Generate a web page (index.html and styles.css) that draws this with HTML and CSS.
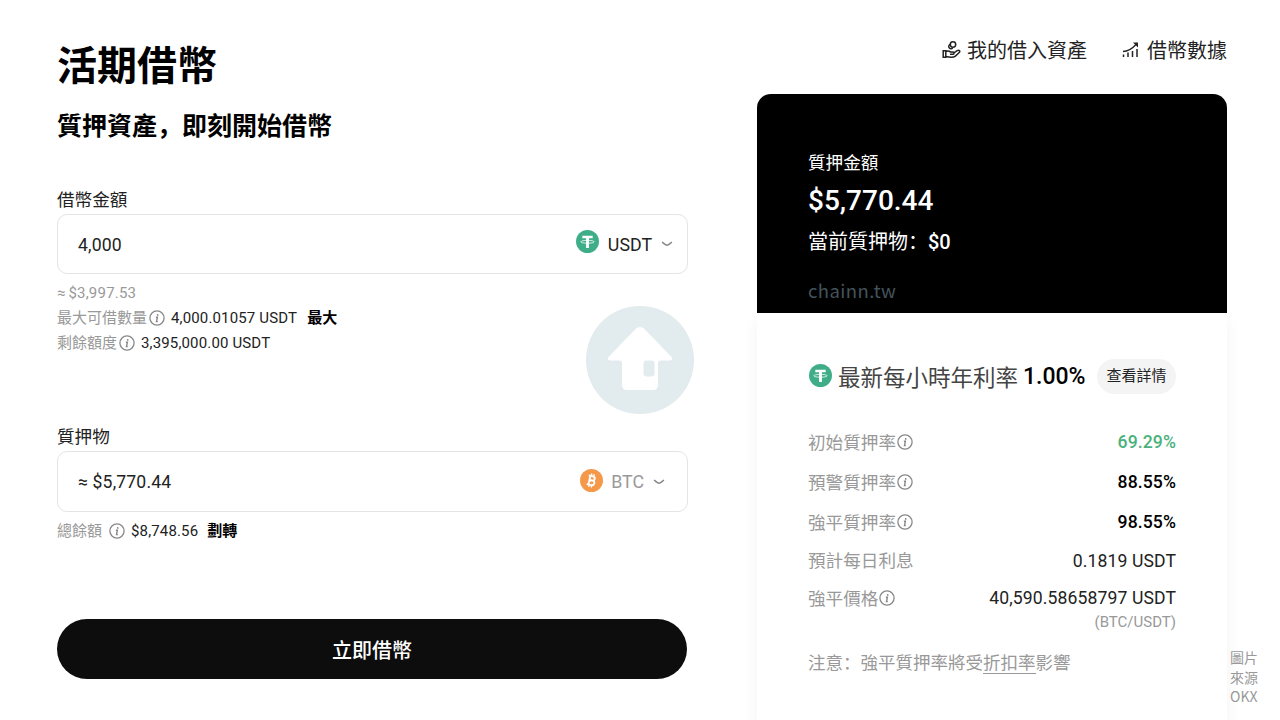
FILE: index.html
```
<!DOCTYPE html>
<html lang="zh-CN">
<head>
    <meta charset="UTF-8">
    <meta name="viewport" content="width=device-width, initial-scale=1.0">
    <title>活期借幣</title>
    <link rel="stylesheet" href="styles.css">
</head>
<body>
    <svg class="defs" width="0" height="0">
        <symbol id="info" viewBox="0 0 16 16">
            <circle cx="8" cy="8" r="7.1" fill="none" stroke="currentColor" stroke-width="1.3"/>
            <circle cx="8.7" cy="4.9" r="0.9" fill="currentColor"/>
            <path d="M6.9 7.2h1.5l-.9 4.4h1.3" fill="none" stroke="currentColor" stroke-width="1.4"/>
        </symbol>
        <symbol id="usdt" viewBox="0 0 24 24">
            <circle cx="12" cy="12" r="12" fill="#3fae88"/>
            <path d="M6.6 6h10.8v2.7h-3.9v10h-3v-10H6.6z" fill="#fff"/>
            <ellipse cx="12" cy="12.3" rx="7" ry="1.5" fill="none" stroke="#fff" stroke-width=".8"/>
        </symbol>
        <symbol id="btc" viewBox="0 0 24 24">
            <circle cx="12" cy="12" r="12" fill="#f5984a"/>
            <g transform="rotate(13 12 12)" fill="none" stroke="#fff" stroke-width="2">
                <path d="M8 7.4h4.6a2.200 2.200 0 0 1 0 4.500H9.800h3.300a2.400 2.400 0 0 1 0 4.800H8M9.800 7.400v9.300"/>
                <path d="M10.700 4.800v2.500M13.300 4.800v2.500M10.700 16.700v2.500M13.300 16.700v2.500" stroke-width="1.4"/>
            </g>
        </symbol>
        <symbol id="arrow" viewBox="0 0 12 6">
            <path d="M1 1.200C3 2.200 4 4.200 6 4.200S9 2.200 11 1.200" fill="none" stroke="currentColor" stroke-width="1.5"/>
        </symbol>
    </svg>

    <div class="page">
        <div class="form">
            <h1>活期借幣</h1>
            <h2>質押資產，即刻開始借幣</h2>

            <div class="label">借幣金額</div>
            <div class="field">
                <span class="value">4,000</span>
                <div class="coin coin-usdt">
                    <svg class="coin-icon"><use href="#usdt"/></svg>
                    <span>USDT</span>
                    <svg class="arrow"><use href="#arrow"/></svg>
                </div>
            </div>
            <div class="notes">
                <div class="note">≈<span class="usd">$3,997.53</span></div>
                <div class="note">最大可借數量<svg class="info"><use href="#info"/></svg><span class="num">4,000.01057 USDT</span><b>最大</b></div>
                <div class="note">剩餘額度<svg class="info"><use href="#info"/></svg><span class="num">3,395,000.00 USDT</span></div>
            </div>

            <div class="label">質押物</div>
            <div class="field field-btc">
                <span class="value">≈ $5,770.44</span>
                <div class="coin coin-btc">
                    <svg class="coin-icon"><use href="#btc"/></svg>
                    <span>BTC</span>
                    <svg class="arrow"><use href="#arrow"/></svg>
                </div>
            </div>
            <div class="note note-balance">總餘額<svg class="info"><use href="#info"/></svg><span class="num">$8,748.56</span><b>劃轉</b></div>

            <button class="submit">立即借幣</button>
        </div>

        <div class="side">
            <div class="nav">
                <a>
                    <svg width="19" height="18" viewBox="0 0 19 18" fill="none" stroke="#222" stroke-width="1.5">
                        <circle cx="11" cy="3.500" r="2.700"/>
                        <path d="M8.400 3.300a2.300 2.300 0 1 0 2.300 3.800"/>
                        <path d="M1.200 9.800h2.600v6.400H1.200zM3.800 10.500c2-1 3.600-.6 4.800.6h2.200c1.600 0 1.600 2.200 0 2.200H8M11.800 11.800l3.400-2.100c2-1.100 3.400.7 1.800 2.100l-3.600 3.300c-1.800 1.500-5.400 1.300-9.600.4"/>
                    </svg>
                    <span>我的借入資產</span>
                </a>
                <a>
                    <svg width="17" height="16" viewBox="0 0 17 16" fill="none" stroke="#222" stroke-width="1.5">
                        <path d="M1.500 15v-2.500M6 15v-4.500M10.500 15V9M15 15V7"/>
                        <path d="M1 9.500c5 0 8.500-2 13-7" stroke-width="1.3"/>
                        <path d="M11 .5h5v5z" fill="#222" stroke="none"/>
                    </svg>
                    <span>借幣數據</span>
                </a>
            </div>

            <div class="card">
                <div class="card-top">
                    <div class="top-label">質押金額</div>
                    <div class="top-amount">$5,770.44</div>
                    <div class="top-current">當前質押物：<b>$0</b></div>
                    <div class="site">chainn.tw</div>
                </div>
                <div class="card-body">
                    <div class="rate">
                        <svg class="coin-icon"><use href="#usdt"/></svg>
                        <span class="rate-text">最新每小時年利率</span>
                        <span class="rate-num">1.00%</span>
                        <span class="detail">查看詳情</span>
                    </div>
                    <div class="row"><span>初始質押率<svg class="info"><use href="#info"/></svg></span><b class="green">69.29%</b></div>
                    <div class="row"><span>預警質押率<svg class="info"><use href="#info"/></svg></span><b>88.55%</b></div>
                    <div class="row"><span>強平質押率<svg class="info"><use href="#info"/></svg></span><b>98.55%</b></div>
                    <div class="row row-low"><span>預計每日利息</span><em>0.1819 USDT</em></div>
                    <div class="row row-low"><span>強平價格<svg class="info"><use href="#info"/></svg></span><em class="price">40,590.58658797 USDT</em></div>
                    <div class="pair">(BTC/USDT)</div>
                    <div class="warn">注意：強平質押率將受<u>折扣率</u>影響</div>
                </div>
            </div>
        </div>
    </div>

    <!-- watermark -->
    <svg class="watermark" viewBox="0 0 108 108">
        <circle cx="54" cy="54" r="54" fill="#e2ebee"/>
        <path d="M50 22.500q4-3 8 0L85.500 51q2 3.500-2 3.500H75q-3 0-3 3V79q0 5-5 5H41q-5 0-5-5V57.500q0-3-3-3h-8.500q-4 0-2-3.500z" fill="#fff"/>
        <rect x="57.500" y="54.500" width="11" height="16" rx="3" fill="#e2ebee"/>
    </svg>
    <div class="source">圖片<br>來源<br>OKX</div>
</body>
</html>
```
FILE: styles.css
```
* {
    box-sizing: border-box;
}

body {
    margin: 0;
    height: 720px;
    overflow: hidden;
    position: relative;
    background-color: #fff;
    color: #222;
    font-family: Roboto, "Noto Sans CJK SC", sans-serif;
}

.defs {
    position: absolute;
}

.page {
    display: flex;
    justify-content: space-between;
    height: 720px;
    padding: 0 53px 0 57px;
}

/* Form */
.form {
    width: 631px;
    padding-top: 36px;
}

h1 {
    margin: 0;
    font-size: 40px;
    line-height: 61px;
    color: #000;
}

h2 {
    margin: 11px 0 40px;
    font-size: 25px;
    line-height: 38px;
    color: #000;
}

.label {
    height: 28px;
    font-size: 17.6px;
    line-height: 29px;
}

.field {
    display: flex;
    align-items: center;
    justify-content: space-between;
    height: 60px;
    padding: 0 14px 0 20px;
    border: 1px solid #e4e4e4;
    border-radius: 10px;
}

.field-btc {
    height: 61px;
    padding-right: 22px;
}

.value {
    padding-top: 1px;
    font-size: 17.6px;
    letter-spacing: 0.15px;
}

.coin {
    display: flex;
    align-items: center;
    font-size: 17.8px;
}

.coin-btc {
    color: #999;
}

.coin-icon {
    width: 23px;
    height: 23px;
    margin-right: 9px;
}

.coin-usdt .coin-icon {
    margin-bottom: 5px;
}

.coin-btc .coin-icon {
    margin-right: 8px;
    margin-bottom: 2px;
}

.arrow {
    width: 12px;
    height: 6px;
    margin-left: 9px;
    color: #888;
}

.notes {
    padding-top: 6px;
    height: 149px;
}

.note {
    display: flex;
    align-items: center;
    height: 25px;
    font-size: 15px;
    line-height: 20px;
    color: #999;
}

.usd {
    margin-left: 3px;
    letter-spacing: 0.2px;
}

.info {
    width: 16px;
    height: 16px;
    margin-left: 2px;
    color: #888;
}

.num {
    margin-left: 6px;
    color: #222;
    letter-spacing: 0.15px;
}

.note b {
    margin-left: 10px;
    color: #000;
}

.note-balance {
    margin-top: 6px;
}

.note-balance .info {
    margin-left: 7px;
}

.note-balance b {
    margin-left: 9px;
}

.submit {
    width: 630px;
    height: 60px;
    margin-top: 76px;
    border: none;
    border-radius: 30px;
    background-color: #0d0d0d;
    color: #fff;
    font-family: inherit;
    font-size: 20px;
    font-weight: 500;
}

/* Right side */
.side {
    width: 470px;
}

.nav {
    display: flex;
    justify-content: flex-end;
    gap: 35px;
    height: 94px;
    padding-top: 36px;
    font-size: 20px;
    line-height: 30px;
}

.nav a {
    display: flex;
    align-items: center;
    gap: 6px;
    height: 30px;
}

.nav svg {
    margin-bottom: 3px;
}

.nav a + a {
    gap: 8px;
}

.card-top {
    height: 219px;
    padding: 55px 51px 0;
    border-radius: 14px 14px 0 0;
    background-color: #000;
    color: #fff;
}

.top-label {
    font-size: 17.6px;
    line-height: 28px;
}

.top-amount {
    font-size: 28px;
    font-weight: 500;
    line-height: 48px;
}

.top-current {
    font-size: 20px;
    line-height: 34px;
}

.top-current b {
    font-weight: 500;
}

.site {
    margin-top: 17px;
    font-family: "Noto Sans CJK SC", sans-serif;
    font-size: 18.5px;
    line-height: 28px;
    letter-spacing: 0.4px;
    color: #43535c;
}

.card-body {
    height: 407px;
    padding: 44px 51px 0;
    box-shadow: 0 8px 16px rgba(0, 0, 0, 0.05);
}

.rate {
    display: flex;
    align-items: center;
    height: 38px;
    margin-bottom: 28px;
    white-space: nowrap;
}

.rate .coin-icon {
    margin: 0 6px 1px 1px;
}

.rate-text {
    font-size: 22.5px;
    color: #444;
}

.rate-num {
    margin-left: 5px;
    font-size: 23px;
    font-weight: 500;
    color: #000;
}

.detail {
    margin-left: 11px;
    padding: 0 9px 0 10px;
    border-radius: 18px;
    background-color: #f4f4f4;
    font-size: 15px;
    line-height: 35px;
}

.row {
    display: flex;
    align-items: center;
    justify-content: space-between;
    height: 40px;
    font-size: 17.6px;
    line-height: 24px;
    color: #999;
}

.row span {
    display: flex;
    align-items: center;
}

.row .info {
    margin-left: 1px;
    margin-bottom: 2px;
}

.row b {
    margin-top: -2px;
    font-weight: 500;
    letter-spacing: 0.1px;
    color: #000;
}

.row .green {
    color: #4bb27c;
}

.row em {
    margin-top: -3px;
    font-style: normal;
    letter-spacing: 0.1px;
    color: #222;
}

.row-low {
    height: 38px;
}

.row-low span {
    margin-top: -2px;
}

.row .price {
    margin-top: -5px;
}

.pair {
    margin-top: -9px;
    font-size: 15px;
    line-height: 24px;
    text-align: right;
    color: #999;
}

.warn {
    margin-top: 16px;
    font-size: 17.5px;
    line-height: 26px;
    color: #999;
}

.warn u {
    text-decoration: none;
    border-bottom: 1px solid #999;
}

.watermark {
    position: absolute;
    left: 586px;
    top: 306px;
    width: 108px;
    height: 108px;
}

.source {
    position: absolute;
    left: 1230px;
    top: 648px;
    font-family: "Noto Sans CJK SC", sans-serif;
    font-size: 14px;
    line-height: 19.5px;
    color: #999;
}
```
